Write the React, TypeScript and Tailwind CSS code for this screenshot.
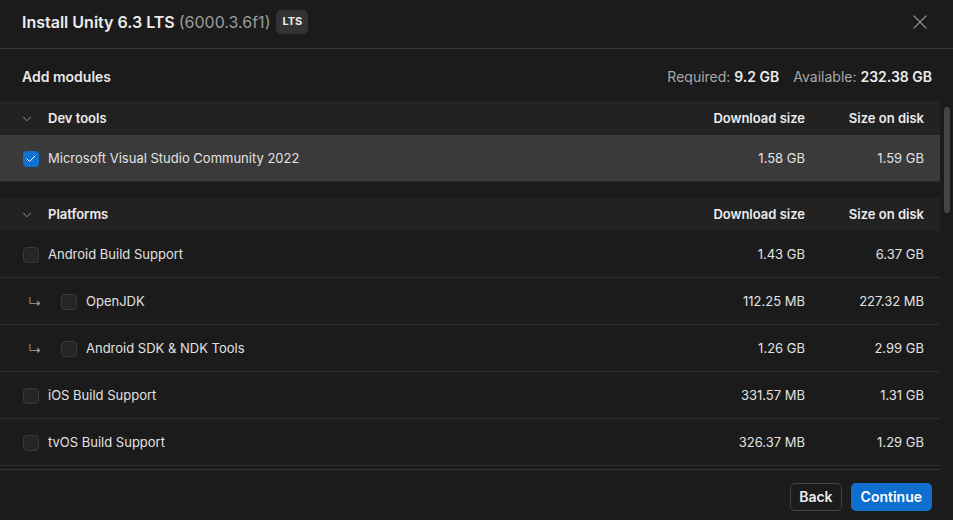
import { X, ChevronDown, Check } from 'lucide-react';

type Module = {
  name: string;
  download: string;
  disk: string;
  checked?: boolean;
  child?: boolean;
};

const devTools: Module[] = [
  { name: 'Microsoft Visual Studio Community 2022', download: '1.58 GB', disk: '1.59 GB', checked: true },
];

const platforms: Module[] = [
  { name: 'Android Build Support', download: '1.43 GB', disk: '6.37 GB' },
  { name: 'OpenJDK', download: '112.25 MB', disk: '227.32 MB', child: true },
  { name: 'Android SDK & NDK Tools', download: '1.26 GB', disk: '2.99 GB', child: true },
  { name: 'iOS Build Support', download: '331.57 MB', disk: '1.31 GB' },
  { name: 'tvOS Build Support', download: '326.37 MB', disk: '1.29 GB' },
];

function Checkbox({ checked }: { checked?: boolean }) {
  return checked ? (
    <div className="w-4 h-4 rounded-[4px] bg-[#1170d3] flex items-center justify-center shrink-0">
      <Check className="w-3 h-3 text-white" strokeWidth={2} />
    </div>
  ) : (
    <div className="w-4 h-4 rounded-[4px] bg-[#252525] border border-[#3a3a3a] shrink-0" />
  );
}

function SectionHeader({ title, tall }: { title: string; tall?: boolean }) {
  return (
    <div
      className={`${tall ? 'h-[34px]' : 'h-[33px]'} pt-[1px] bg-[#222222] flex items-center text-[13px] font-semibold text-[#ededed]`}
    >
      <div className="w-[48px] flex justify-center pl-[14px] pr-[8px]">
        <ChevronDown className="w-[14px] h-[14px] text-[#a0a0a0]" strokeWidth={1.5} />
      </div>
      <span className="flex-1">{title}</span>
      <span className="w-[140px] text-right">Download size</span>
      <span className="w-[119px] text-right pr-[16px] box-content">Size on disk</span>
    </div>
  );
}

function ModuleRow({ m, selected }: { m: Module; selected?: boolean }) {
  return (
    <div
      className={`h-[47px] pt-[2px] flex items-center text-[13px] text-[#e2e2e2] border-b ${
        selected ? 'bg-[#3a3a3a] border-[#2c2c2c]' : 'border-[#2e2e2e]'
      }`}
    >
      {m.child && (
        <span className="w-[38px] pl-[28px] text-[#9a9a9a] text-[14px] font-light">↳</span>
      )}
      <div className="ml-[23px]">
        <Checkbox checked={m.checked} />
      </div>
      <span className="ml-[9px] flex-1">{m.name}</span>
      <span className="w-[140px] text-right">{m.download}</span>
      <span className="w-[119px] text-right pr-[16px] box-content">{m.disk}</span>
    </div>
  );
}

export default function App() {
  return (
    <div
      className="w-[953px] h-[520px] bg-[#1b1b1b] flex flex-col overflow-hidden text-white"
      style={{ fontFamily: 'Inter, "Noto Sans", sans-serif' }}
    >
      {/* Title */}
      <div className="h-[49px] shrink-0 flex items-center justify-between pl-[22px] pr-[21px] pb-[5px] border-b border-[#3a3a3a]">
        <div className="flex items-center gap-[6px]">
          <span className="text-[16px] font-semibold text-[#ececec]">
            Install Unity 6.3 LTS <span className="font-normal text-[#9c9c9c]">(6000.3.6f1)</span>
          </span>
          <span className="h-[24px] px-[6px] rounded-[5px] bg-[#333333] text-[11px] font-bold text-[#e8e8e8] flex items-center">
            LTS
          </span>
        </div>
        <X className="w-6 h-6 text-[#8a8a8a]" strokeWidth={1.2} />
      </div>

      {/* Add modules */}
      <div className="h-[52px] shrink-0 flex items-center justify-between pl-[22px] pr-[21px] pt-[3px] text-[14px]">
        <span className="font-semibold text-[#e8e8e8]">Add modules</span>
        <div className="flex items-center gap-[14px]">
          <span className="text-[#a8a8a8]">
            Required: <span className="font-semibold text-[#ececec]">9.2 GB</span>
          </span>
          <span className="text-[#a8a8a8]">
            Available: <span className="font-semibold text-[#ececec]">232.38 GB</span>
          </span>
        </div>
      </div>

      {/* Module list */}
      <div className="flex h-[369px] shrink-0">
        <div className="w-[940px] overflow-hidden border-b border-[#333333]">
          <SectionHeader title="Dev tools" tall />
          {devTools.map((m) => (
            <ModuleRow key={m.name} m={m} selected />
          ))}
          <div className="h-[16px]" />
          <SectionHeader title="Platforms" />
          {platforms.map((m) => (
            <ModuleRow key={m.name} m={m} />
          ))}
        </div>
        <div className="flex-1 pt-[6px] flex justify-center">
          <div className="w-[6px] h-[106px] rounded-full bg-[#444444]" />
        </div>
      </div>

      {/* Footer */}
      <div className="flex-1 flex items-center justify-end gap-[9px] pr-[21px] pt-[4px]">
        <button className="h-[28px] px-[8px] leading-none rounded-[5px] border border-[#444444] text-[14px] font-semibold text-[#ececec]">
          Back
        </button>
        <button className="h-[28px] px-[10px] leading-none rounded-[5px] bg-[#0e6fcf] text-[14px] font-semibold text-white">
          Continue
        </button>
      </div>
    </div>
  );
}
